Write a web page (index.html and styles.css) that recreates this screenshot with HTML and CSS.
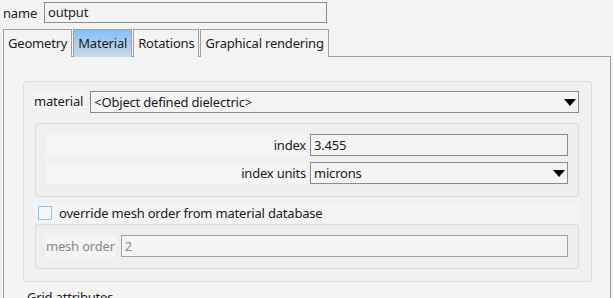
FILE: index.html
```html
<!DOCTYPE html>
<html lang="en">
<head>
    <meta charset="UTF-8">
    <title>Material</title>
    <link rel="stylesheet" href="styles.css">
</head>
<body>
    <div class="name-row">
        <span>name</span>
        <div class="field name-field">output</div>
    </div>

    <div class="tabs">
        <div class="tab">Geometry</div>
        <div class="tab active">Material</div>
        <div class="tab">Rotations</div>
        <div class="tab">Graphical rendering</div>
    </div>

    <div class="panel">
        <div class="group">
            <div class="mat-row">
                <span class="lbl">material</span>
                <div class="field combo">
                    <span>&lt;Object defined dielectric&gt;</span>
                    <svg class="arrow" width="12" height="7" viewBox="0 0 12 7"><polygon points="0,0 12,0 6,7" fill="#000"/></svg>
                </div>
            </div>

            <div class="sub">
                <div class="row">
                    <span class="lbl right">index</span>
                    <div class="field">3.455</div>
                </div>
                <div class="row">
                    <span class="lbl right">index units</span>
                    <div class="field combo">
                        <span>microns</span>
                        <svg class="arrow" width="12" height="7" viewBox="0 0 12 7"><polygon points="0,0 12,0 6,7" fill="#000"/></svg>
                    </div>
                </div>
            </div>

            <div class="check-row">
                <span class="box"></span>
                <span>override mesh order from material database</span>
            </div>

            <div class="sub mesh">
                <div class="mesh-row">
                    <span class="lbl">mesh order</span>
                    <div class="field disabled">2</div>
                </div>
            </div>
        </div>

        <div class="section-title">Grid attributes</div>
    </div>
</body>
</html>
```

FILE: styles.css
```css
* {
    box-sizing: border-box;
}

body {
    margin: 0;
    width: 613px;
    height: 298px;
    overflow: hidden;
    background: #f4f4f4;
    color: #1b1b1b;
    font: 13px "Noto Sans", "Open Sans", sans-serif;
    letter-spacing: -0.2px;
}

/* 输入框 */
.field {
    height: 22px;
    border: 1px solid #8c8c8c;
    background: #f4f4f4;
    padding: 0 3px;
    line-height: 20px;
    white-space: nowrap;
}

.field.disabled {
    border-color: #a2a2a2;
    color: #8e8e8e;
}

.combo {
    display: flex;
    justify-content: space-between;
    align-items: center;
    padding-right: 2px;
}

.arrow {
    margin-top: 1px;
}

.lbl {
    background: #f5f5f5;
    line-height: 21px;
    white-space: nowrap;
}

.lbl.right {
    text-align: right;
}

/* 名称 */
.name-row {
    display: flex;
    align-items: center;
    gap: 7px;
    padding: 2px 0 0 3px;
}

.name-field {
    width: 283px;
    height: 21px;
    line-height: 19px;
}

/* 标签页 */
.tabs {
    display: flex;
    gap: 1px;
    margin: 6px 0 0 3px;
    position: relative;
    z-index: 1;
}

.tab {
    height: 28px;
    margin-bottom: -1px;
    padding: 0 4px;
    border: 1px solid #a0a0a0;
    border-bottom: none;
    background: #f4f4f4;
    line-height: 26px;
}

.tab.active {
    background: linear-gradient(#84c0f8, #cbd9e5);
}

.panel {
    height: 260px;
    margin: 0 2px 0 3px;
    border: 1px solid #a0a0a0;
    border-bottom: none;
    padding: 24px 18px 0 19px;
}

/* 分组 */
.group {
    border: 1px solid #dedede;
    border-radius: 3px;
    background: #f1f1f1;
    padding: 9px 12px 12px 10px;
}

.mat-row {
    display: flex;
    gap: 7px;
}

.mat-row .combo {
    flex: 1;
}

.sub {
    margin: 10px 0 0 1px;
    border: 1px solid #dcdcdc;
    border-radius: 3px;
    background: #efefef;
    padding: 10px 10px 12px 10px;
    display: flex;
    flex-direction: column;
    gap: 6px;
}

.row {
    display: grid;
    grid-template-columns: 1fr 258px;
    gap: 4px;
    align-items: center;
}

.check-row {
    display: flex;
    align-items: center;
    gap: 7px;
    height: 21px;
    margin-top: 5px;
    padding-left: 4px;
    background: #f4f4f4;
}

.box {
    width: 14px;
    height: 14px;
    border: 1px solid #8cc4f2;
    background: #f6f6f6;
}

.sub.mesh {
    margin-top: 1px;
    padding-bottom: 11px;
}

.mesh-row {
    display: flex;
    align-items: center;
    gap: 6px;
}

.mesh-row .lbl {
    color: #8a8a8a;
}

.mesh-row .field {
    flex: 1;
}

.section-title {
    margin: 6px 0 0 4px;
}
```
